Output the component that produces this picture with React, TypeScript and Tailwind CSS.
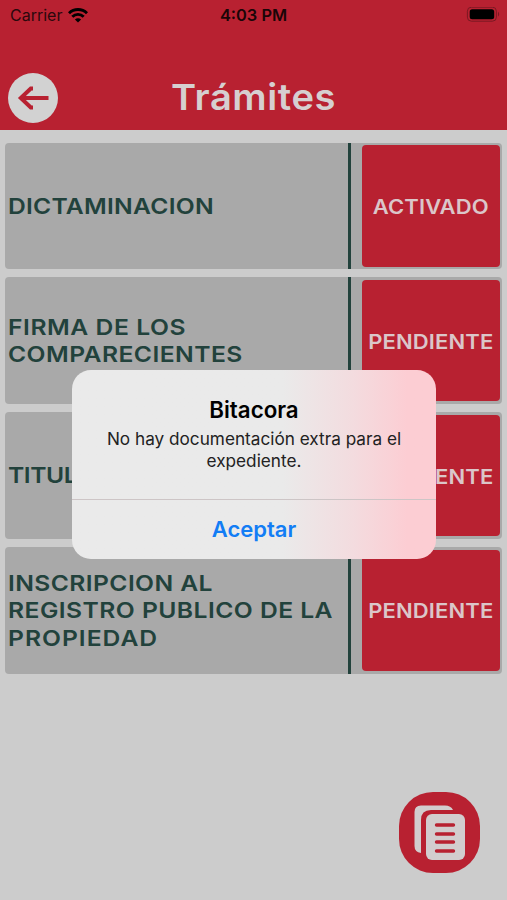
import { clsx } from "clsx";

interface Tramite {
  lines: string[];
  tracking: string[];
  status: string;
}

const tramites: Tramite[] = [
  { lines: ["DICTAMINACION"], tracking: ["tracking-[0.22px]"], status: "ACTIVADO" },
  {
    lines: ["FIRMA DE LOS", "COMPARECIENTES"],
    tracking: ["tracking-[0.5px]", "tracking-[0.4px]"],
    status: "PENDIENTE",
  },
  { lines: ["TITULACION"], tracking: ["tracking-[-0.4px]"], status: "PENDIENTE" },
  {
    lines: ["INSCRIPCION AL", "REGISTRO PUBLICO DE LA", "PROPIEDAD"],
    tracking: ["tracking-[0.36px]", "tracking-[0.41px]", "tracking-[0.9px]"],
    status: "PENDIENTE",
  },
];

function StatusBar() {
  return (
    <div className="grid h-[30px] grid-cols-3 items-center pr-[7px] pl-[10px] text-black">
      <div className="flex items-center gap-[6px]">
        <span className="text-[16px] text-[#2b080c]">Carrier</span>
        <svg width="20" height="15" viewBox="0 0 20 15" fill="none" stroke="currentColor" strokeWidth="2.9">
          <path d="M1 5.2C6 .3 14 .3 19 5.2" />
          <path d="M4.3 8.8c3.3-3.2 8.1-3.2 11.4 0" />
          <path d="M10 14.6 6.9 11.4c1.8-1.5 4.4-1.5 6.2 0z" fill="currentColor" stroke="none" />
        </svg>
      </div>
      <span className="-ml-[3px] text-center text-[16.4px] font-semibold whitespace-nowrap text-[#1a0507]">
        4:03 PM
      </span>
      <svg className="justify-self-end" width="34" height="16" viewBox="0 0 34 16">
        <rect x="1.4" y=".2" width="29" height="14" rx="4" fill="none" stroke="#7a1822" strokeWidth="1" />
        <rect x="3.7" y="2.2" width="24.5" height="10" rx="2.5" fill="#000" />
        <path d="M32 4.8c1.6.8 1.6 4 0 4.8z" fill="#7a1822" />
      </svg>
    </div>
  );
}

function Header() {
  return (
    <header className="h-[130px] bg-[#b82131]">
      <StatusBar />
      <div className="grid h-[100px] grid-cols-[50px_1fr_50px] items-center px-[8px] pt-[36px]">
        <button className="flex size-[50px] items-center justify-center rounded-full bg-[#d2d2d2]">
          <svg width="32" height="24" viewBox="0 0 32 24" fill="none" stroke="#b82131" strokeWidth="4">
            <path d="M31.5 12H3.5" />
            <path d="M16 2.5h-2.200L3.8 12l10 9.500H16" />
          </svg>
        </button>
        <h1 className="mb-[2px] scale-x-106 text-center text-[36px] leading-none font-semibold tracking-[0.5px] text-[#d6cfd0]">
          Trámites
        </h1>
      </div>
    </header>
  );
}

function TramiteRow({ tramite }: { tramite: Tramite }) {
  return (
    <div className="flex h-[126.5px] rounded-[4px] bg-[#a9a9a9]">
      <div className="flex w-[346px] flex-col justify-center border-r-[3px] border-[#22423c] pt-px pl-[3px] text-[22px] leading-[27.3px] font-semibold text-[#22423c]">
        {tramite.lines.map((line, index) => (
          <span
            key={line}
            className={clsx("origin-left scale-x-112 whitespace-nowrap", tramite.tracking[index])}
          >
            {line}
          </span>
        ))}
      </div>
      <div className="flex flex-1 py-[2.5px] pr-[2px] pl-[11px]">
        <div className="flex flex-1 items-center justify-center rounded-[4px] bg-[#b82131] pt-[2px] text-[20px] font-semibold text-[#dbc6c9]">
          <span className="scale-x-110 tracking-[0.1px]">{tramite.status}</span>
        </div>
      </div>
    </div>
  );
}

function Alert() {
  return (
    <div className="absolute top-[370px] left-[72px] flex h-[189px] w-[364px] flex-col overflow-hidden rounded-[19px] bg-linear-to-r from-[#eaeaea] from-58% via-[#f3dcdf] via-77% to-[#fccdd3] to-92% text-center">
      <div className="h-[130px] border-b border-[#cdc5c6] pt-[26px]">
        <h2 className="text-[22.3px] leading-[27px] font-semibold text-black">Bitacora</h2>
        <p className="mt-[5px] text-[17.2px] leading-[22px] text-[#222]">
          No hay documentación extra para el
          <br />
          expediente.
        </p>
      </div>
      <button className="flex-1 text-[22px] font-semibold text-[#127df5]">Aceptar</button>
    </div>
  );
}

export default function App() {
  return (
    <div className="relative h-[900px] w-[507px] overflow-hidden bg-[#cccccc] font-['Inter',sans-serif]">
      <Header />
      <main className="flex flex-col gap-[8.4px] px-[5px] pt-[12.5px]">
        {tramites.map((tramite) => (
          <TramiteRow key={tramite.lines[0]} tramite={tramite} />
        ))}
      </main>
      <Alert />
      <button className="absolute top-[792px] left-[399px] size-[81px]">
        <svg width="81" height="81" viewBox="0 0 81 81">
          <rect width="81" height="81" rx="34" fill="#b82131" />
          <path d="M22 13.5H46Q52 13.5 54 18H32Q22 18 22 28V61Q15.5 60 15.5 54V20Q15.5 13.5 22 13.5Z" fill="#d2cdce" />
          <rect x="27" y="22" width="39" height="46" rx="6" fill="#d2cdce" />
          <path d="M37.5 33h17M37.5 42h17M37.5 50h17M37.5 59h17" stroke="#b82131" strokeWidth="3.4" strokeLinecap="round" />
        </svg>
      </button>
    </div>
  );
}
